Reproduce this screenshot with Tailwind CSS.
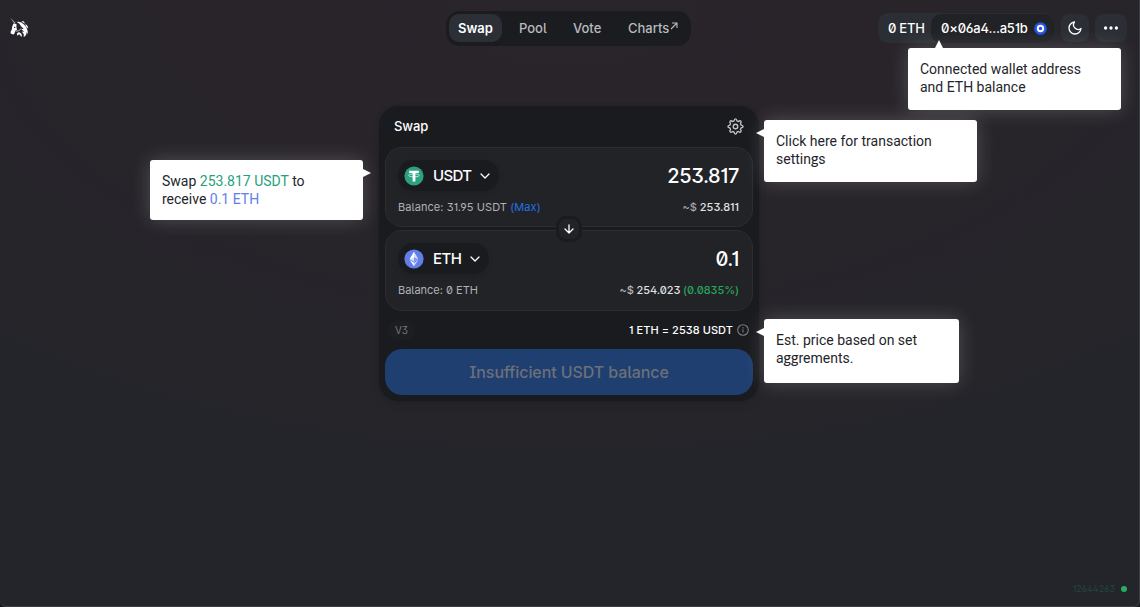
<!DOCTYPE html>
<html lang="en">
<head>
<meta charset="utf-8">
<title>Swap</title>
<script src="https://cdn.jsdelivr.net/npm/@tailwindcss/browser@4"></script>
</head>
<body class="bg-[#15161a]">
<div class="relative flex h-[607px] w-[1140px] flex-col overflow-hidden rounded-b-[6px] border-r border-b border-[#3b3e43] bg-[#24252a] bg-[radial-gradient(ellipse_900px_480px_at_50%_0%,#2a242b_0%,#28242a_40%,#24252a_100%)] font-['Inter',sans-serif] text-white [font-feature-settings:'ss01','ss02','cv01','cv03']">

  <header class="grid h-14 shrink-0 grid-cols-[1fr_245px_1fr] items-center pr-[12px] pl-[10px]">
    <svg class="-ml-px h-[22px] w-[22px]" viewBox="0 0 22 22" fill="#fff">
      <path d="M1 0.5 L6.6 6 L5.8 7.1 Z" opacity=".65"/>
      <path d="M4.600 6.500 L7.600 7.300 Q6.900 10.500 8 12.700 L6.200 13.800 Q5.800 17.300 4 17.500 L1.800 16.500 Q1.200 14.800 2.800 12.600 Q2.800 9 4.600 6.500Z"/>
      <path d="M7.800 4.900 Q12.500 4.300 15 7.500 Q18.800 10.500 19 17.200 L17.600 15 Q17.800 18.500 14.600 20 Q15.600 16.500 12.600 14.800 L15.200 14.600 L12.200 12.200 L14.700 11.800 L12 9.200 Q11 6.300 7.800 4.900Z"/>
      <path d="M12.500 4.700 L14.300 4 L16.400 6.700Z M16 7 Q19 8 19.300 11.500 L20.800 12.700 L17.500 10Z"/>
      <path d="M8.200 18.800 Q7.200 15.600 10.300 15.300 Q13 16.300 12.900 19.700 Q11.200 19.400 10.900 17.600 Q9.200 17.500 8.200 18.800Z"/>
      <path d="M6.500 14.300 Q10.500 14.300 12.300 11.500" fill="none" stroke="#fff" stroke-width=".9" opacity=".75"/>
      <circle cx="5.700" cy="10.400" r=".7" fill="#232429"/>
    </svg>
    <nav class="flex h-[35px] items-center rounded-[14px] bg-[#1b1c20] p-[3px] text-[13px] font-medium text-[#b9babe]">
      <a class="flex h-7 w-[53px] items-center justify-center rounded-[10px] bg-[#2c2f36] pt-px font-semibold text-white">Swap</a>
      <a class="ml-[17px] w-[28px] pt-px whitespace-nowrap">Pool</a>
      <a class="ml-[26px] w-[28px] pt-px whitespace-nowrap">Vote</a>
      <a class="ml-[27px] flex pt-px whitespace-nowrap">Charts<svg class="mt-[3px] ml-px h-[8px] w-[8px]" viewBox="0 0 8 8" fill="none" stroke="currentColor" stroke-width="1.1"><path d="M1 7 L7 1 M2 1H7V6"/></svg></a>
    </nav>
    <div class="flex items-center justify-end">
      <div class="flex h-[30px] w-[176px] items-center rounded-[10px] bg-[#2b2e34] text-[13px] font-medium">
        <span class="w-[53px] pt-px pl-[10px] tracking-[-0.25px] whitespace-nowrap">0 ETH</span>
        <div class="flex h-[29px] flex-1 items-center rounded-[10px] bg-[#212226] pl-[10px]">
          <span class="w-[88px] pt-px tracking-[-0.2px] whitespace-nowrap">0×06a4...a51b</span>
          <svg class="ml-[5px] h-[13px] w-[13px] shrink-0" viewBox="0 0 13 13"><circle cx="6.5" cy="6.5" r="6.3" fill="#2454ee"/><circle cx="6.5" cy="6.5" r="2.7" fill="#2454ee" stroke="#fff" stroke-width="1.9"/></svg>
        </div>
      </div>
      <div class="ml-[7px] flex h-7 w-7 items-center justify-center rounded-[8px] bg-[#2b2e34]">
        <svg class="h-[16px] w-[16px]" viewBox="0 0 24 24" fill="none" stroke="#fff" stroke-width="2" stroke-linecap="round" stroke-linejoin="round"><path d="M21 12.79A9 9 0 1 1 11.21 3 7 7 0 0 0 21 12.79z"/></svg>
      </div>
      <div class="ml-[6px] flex h-7 w-8 items-center justify-center rounded-[8px] bg-[#2b2e34]">
        <svg class="h-4 w-4" viewBox="0 0 16 16" fill="#fff"><circle cx="2.6" cy="8" r="1.65"/><circle cx="8" cy="8" r="1.65"/><circle cx="13.4" cy="8" r="1.65"/></svg>
      </div>
    </div>
  </header>

  <main class="mt-[50px] ml-[379px] flex h-[295px] w-[380px] flex-col rounded-[20px] bg-[#1a1b1f] px-[6px] shadow-[0_0_3px_rgba(0,0,0,0.15),0_4px_10px_rgba(0,0,0,0.08)]">
    <div class="flex h-[41px] items-center justify-between pr-[9px] pl-[9px]">
      <h1 class="text-[13px] font-medium tracking-[-0.1px]">Swap</h1>
      <svg class="h-[17px] w-[17px]" viewBox="0 0 24 24" fill="none" stroke="#c3c5cb" stroke-width="1.9" stroke-linejoin="round"><circle cx="12" cy="12" r="3.2"/><path d="M10 4.2 Q10.3 1.3 12 1.3 Q13.700 1.300 14 4.200 L16.101 5.071 Q18.364 3.232 19.566 4.434 Q20.768 5.636 18.929 7.899 L19.800 10 Q22.700 10.300 22.700 12 Q22.700 13.700 19.800 14 L18.929 16.101 Q20.768 18.364 19.566 19.566 Q18.364 20.768 16.101 18.929 L14 19.800 Q13.700 22.700 12 22.700 Q10.300 22.700 10 19.800 L7.899 18.929 Q5.636 20.768 4.434 19.566 Q3.232 18.364 5.071 16.101 L4.200 14 Q1.300 13.700 1.300 12 Q1.300 10.300 4.200 10 L5.071 7.899 Q3.232 5.636 4.434 4.434 Q5.636 3.232 7.899 5.071 Z"/></svg>
    </div>

    <section class="relative h-[80px] rounded-[17px] border border-[#2b2d33] bg-[#222327] pr-[13px] pl-[12px]">
      <div class="flex items-center justify-between pt-[12px]">
        <button class="flex h-[31px] w-[101px] items-center rounded-[15px] bg-[#1a1b1f] pl-[6px] shadow-[0_3px_6px_rgba(0,0,0,0.08)]">
          <svg class="h-5 w-5" viewBox="0 0 20 20"><circle cx="10" cy="10" r="9.6" fill="#2ba27c"/><path d="M5.2 4.7H14.8V7.1H11.4V15.4H8.6V7.1H5.2Z" fill="#fff"/><ellipse cx="10" cy="9.4" rx="5.4" ry="1.5" fill="none" stroke="#fff" stroke-width=".65"/></svg>
          <span class="ml-[9px] w-[38px] pt-px text-left text-[15px] font-medium tracking-[-0.6px]">USDT</span>
          <svg class="ml-[9px] h-[6px] w-[10px]" viewBox="0 0 10 6" fill="none" stroke="#fff" stroke-width="1.3" stroke-linecap="round" stroke-linejoin="round"><path d="M1 1L5 5L9 1"/></svg>
        </button>
        <span class="text-[20px] leading-[30px] font-medium tracking-[-0.4px]">253.817</span>
      </div>
      <div class="mt-[8px] flex items-center justify-between text-[11px] leading-[16px]">
        <span class="tracking-[0.08px] text-[#b0b1b6]">Balance: 31.95 USDT <span class="text-[#2172e5]">(Max)</span></span>
        <span class="font-medium text-[#dfe0e3]"><span class="text-[#a5a7ad]">~$</span> 253.811</span>
      </div>
      <div class="absolute top-[68px] left-[170px] z-10 flex h-[26px] w-[26px] items-center justify-center rounded-[10px] border-[3px] border-[#1a1b1f] bg-[#222327]">
        <svg class="h-[10px] w-[10px]" viewBox="0 0 10 10" fill="none" stroke="#fff" stroke-width="1.3" stroke-linecap="round" stroke-linejoin="round"><path d="M5 1V9M1 5L5 9L9 5"/></svg>
      </div>
    </section>

    <section class="mt-[3px] h-[81px] rounded-[17px] border border-[#2b2d33] bg-[#222327] pr-[13px] pl-[12px]">
      <div class="flex items-center justify-between pt-[12px]">
        <button class="flex h-[31px] w-[91px] items-center rounded-[15px] bg-[#1a1b1f] pl-[6px] shadow-[0_3px_6px_rgba(0,0,0,0.08)]">
          <svg class="h-5 w-5" viewBox="0 0 20 20"><circle cx="10" cy="10" r="9.6" fill="#627eea"/><path d="M10 2.8L5.6 10.2L10 12.8L14.4 10.2Z" fill="#fff" opacity=".75"/><path d="M10 2.8L5.6 10.2L10 8.2Z M10 13.7L5.6 11.1L10 17.2Z" fill="#fff"/><path d="M10 13.7L14.4 11.1L10 17.2Z" fill="#fff" opacity=".65"/><path d="M10 8.2L14.4 10.2L10 12.8Z" fill="#8198ee"/></svg>
          <span class="ml-[9px] w-[28px] pt-px text-left text-[15px] font-medium tracking-[-0.5px]">ETH</span>
          <svg class="ml-[9px] h-[6px] w-[10px]" viewBox="0 0 10 6" fill="none" stroke="#fff" stroke-width="1.3" stroke-linecap="round" stroke-linejoin="round"><path d="M1 1L5 5L9 1"/></svg>
        </button>
        <span class="text-[20px] leading-[30px] font-medium tracking-[-0.4px]">0.1</span>
      </div>
      <div class="mt-[8px] flex items-center justify-between text-[11px] leading-[16px]">
        <span class="text-[#b0b1b6]">Balance: 0 ETH</span>
        <span class="font-medium tracking-[-0.08px] text-[#dfe0e3]"><span class="text-[#b5b6bb]">~$</span> 254.023 <span class="text-[#27a35b]">(0.0835%)</span></span>
      </div>
    </section>

    <div class="flex h-[38px] items-center justify-between pr-[4px] pl-[3px]">
      <span class="flex h-[19px] w-[27px] items-center justify-center rounded-[8px] bg-[#1d1e22] text-[10px] text-[#74767b]">V3</span>
      <span class="flex items-center text-[11px] font-medium tracking-[0.06px]">1 ETH = 2538 USDT
        <svg class="ml-[4px] h-[12px] w-[12px]" viewBox="0 0 12 12" fill="none" stroke="#7c7d83" stroke-width="1.1"><circle cx="6" cy="6" r="5.3"/><path d="M6 5.5V8.5M6 3.3V4.4"/></svg>
      </span>
    </div>
    <button class="h-[46px] shrink-0 rounded-[17px] bg-[#1f3f70] text-[16px] font-medium tracking-[-0.08px] text-[#6c7078]">Insufficient USDT balance</button>
  </main>

  <footer class="mt-auto flex h-[35px] items-center justify-end pr-[12px] text-[9px] text-[#22473c]">
    <span>12644263</span>
    <span class="ml-[6px] h-[6px] w-[6px] rounded-full bg-[#27ae60]"></span>
  </footer>

  <!-- Callouts over the interface -->
  <div class="absolute top-[120px] left-[764px] h-[62px] w-[213px] rounded-[3px] bg-white py-[12px] pl-[12px] font-['Roboto',sans-serif] text-[14px] leading-[18px] text-[#24252a] shadow-[0_0_20px_rgba(255,255,255,0.2)]">
    <svg class="absolute top-[9px] -left-[8px] h-[8px] w-[8px]" viewBox="0 0 8 8" fill="#fff"><path d="M8 0V8L0 4Z"/></svg>
    Click here for transaction<br>settings
  </div>
  <div class="absolute top-[48px] left-[908px] h-[62px] w-[213px] rounded-[3px] bg-white py-[12px] pl-[12px] font-['Roboto',sans-serif] text-[14px] leading-[18px] text-[#24252a] shadow-[0_0_20px_rgba(255,255,255,0.2)]">
    <svg class="absolute -top-[8px] left-[27px] h-[8px] w-[8px]" viewBox="0 0 8 8" fill="#fff"><path d="M0 8H8L4 0Z"/></svg>
    Connected wallet address<br>and ETH balance
  </div>
  <div class="absolute top-[160px] left-[150px] h-[60px] w-[213px] rounded-[3px] bg-white py-[12px] pl-[12px] font-['Roboto',sans-serif] text-[14px] leading-[18px] text-[#24252a] shadow-[0_0_20px_rgba(255,255,255,0.2)]">
    <svg class="absolute top-[9px] -right-[8px] h-[8px] w-[8px]" viewBox="0 0 8 8" fill="#fff"><path d="M0 0V8L8 4Z"/></svg>
    Swap <span class="text-[#26a17b]">253.817 USDT</span> to<br>receive <span class="text-[#627eea]">0.1 ETH</span>
  </div>
  <div class="absolute top-[319px] left-[764px] h-[64px] w-[195px] rounded-[3px] bg-white py-[12px] pl-[12px] font-['Roboto',sans-serif] text-[14px] leading-[18px] text-[#24252a] shadow-[0_0_20px_rgba(255,255,255,0.2)]">
    <svg class="absolute top-[9px] -left-[8px] h-[8px] w-[8px]" viewBox="0 0 8 8" fill="#fff"><path d="M8 0V8L0 4Z"/></svg>
    Est. price based on set<br>aggrements.
  </div>
</div>
</body>
</html>
